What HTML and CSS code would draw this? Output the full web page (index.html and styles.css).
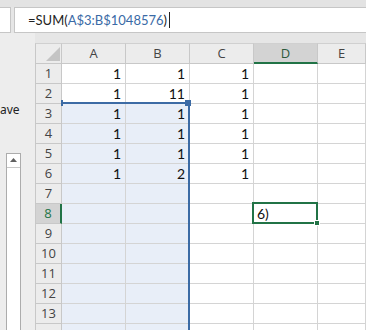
FILE: index.html
```html
<!DOCTYPE html>
<html lang="en">

<head>
  <meta charset="UTF-8" />
  <title>Book1 - Excel</title>
  <link rel="stylesheet" href="styles.css">
</head>

<body>

  <!-- Formula bar -->
  <div class="strip"></div>
  <div class="fbar">
    <div class="namebox"></div>
    <div class="formula">=SUM(<span class="ref">A$3:B$1048576</span>)<span class="caret"></span></div>
  </div>

  <div class="main">
    <!-- Dialog remains on the left -->
    <div class="pane">
      <span class="pane-label">ave</span>
      <div class="listbox">
        <div class="list-up">
          <svg width="7" height="4" viewBox="0 0 7 4"><polygon points="0,4 3.5,0 7,4" fill="#606060" /></svg>
        </div>
      </div>
    </div>

    <!-- Sheet -->
    <div class="sheet" id="sheet">
      <div class="corner">
        <svg width="14" height="14" viewBox="0 0 14 14"><polygon points="14,0 14,14 0,14" fill="#c4c4c4" /></svg>
      </div>
      <div class="colhead">A</div>
      <div class="colhead">B</div>
      <div class="colhead">C</div>
      <div class="colhead active">D</div>
      <div class="colhead">E</div>
    </div>
  </div>

  <script>
    const data = {
      1: ["1", "1", "1"],
      2: ["1", "11", "1"],
      3: ["1", "1", "1"],
      4: ["1", "1", "1"],
      5: ["1", "1", "1"],
      6: ["1", "2", "1"]
    };
    const sheet = document.getElementById("sheet");

    // row 14 only peeks in at the bottom, so it gets no label
    for (let r = 1; r <= 14; r++) {
      const head = document.createElement("div");
      head.className = "rowhead" + (r === 8 ? " active" : "");
      if (r < 14) head.innerText = r;
      sheet.appendChild(head);

      for (let c = 0; c < 5; c++) {
        const cell = document.createElement("div");
        cell.className = "cell";
        if (r >= 3 && c < 2) cell.classList.add("sel");
        const vals = data[r];
        if (vals && vals[c]) cell.innerText = vals[c];
        if (r === 8 && c === 3) {
          cell.innerText = "6)";
          cell.classList.add("text");
        }
        sheet.appendChild(cell);
      }
    }

    // overlays
    const selBox = document.createElement("div");
    selBox.className = "sel-box";
    selBox.innerHTML = '<span class="grip-left"></span><span class="grip-right"></span>';
    sheet.appendChild(selBox);

    const activeBox = document.createElement("div");
    activeBox.className = "active-box";
    activeBox.innerHTML = '<span class="fill-handle"></span>';
    sheet.appendChild(activeBox);
  </script>

</body>

</html>
```

FILE: styles.css
```css
* {
  margin: 0;
  padding: 0;
  box-sizing: border-box;
}

body {
  width: 366px;
  height: 330px;
  overflow: hidden;
  background: #e6e6e6;
  font-family: 'Open Sans', sans-serif;
}

.strip {
  height: 7px;
  background: #e3e3e3;
}

.fbar {
  height: 26px;
  display: flex;
  gap: 3px;
  background: #e6e6e6;
}

.namebox {
  width: 11px;
  background: #fff;
  border: 1px solid #c6c6c6;
  border-left: none;
}

.formula {
  flex: 1;
  background: #fff;
  border: 1px solid #c6c6c6;
  border-right: none;
  padding-left: 13px;
  font-family: 'Lato', sans-serif;
  font-size: 13px;
  line-height: 24px;
  color: #222;
  display: flex;
  align-items: center;
}

.ref {
  color: #3a6aa6;
}

.caret {
  width: 1px;
  height: 16px;
  background: #222;
  margin-left: 2px;
}

.main {
  display: flex;
  padding-top: 10px;
}

.pane {
  width: 35px;
  height: 300px;
  background: #ededed;
  margin-top: -10px;
  padding-top: 10px;
  position: relative;
}

.pane-label {
  display: block;
  margin-top: 60px;
  font-family: 'Noto Sans', sans-serif;
  font-size: 12px;
  color: #222;
  line-height: 14px;
}

.listbox {
  margin: 36px 0 0 6px;
  width: 15px;
  height: 200px;
  background: #fff;
  border: 1px solid #acacac;
}

.list-up {
  height: 14px;
  border-bottom: 1px solid #c8c8c8;
  display: flex;
  justify-content: center;
  align-items: center;
  padding-bottom: 2px;
}

.sheet {
  flex: 1;
  position: relative;
  display: grid;
  grid-template-columns: 27px 64px 64px 64px 64px 1fr;
  grid-template-rows: 21px;
  grid-auto-rows: 20px;
  background: #fff;
}

.corner {
  background: #ececec;
  border: 1px solid #c8c8c8;
  border-top: 1px solid #d0d0d0;
  display: flex;
  justify-content: flex-end;
  align-items: flex-end;
  padding: 0 1px 2px 0;
}

.colhead {
  background: #ececec;
  border-top: 1px solid #d0d0d0;
  border-right: 1px solid #c8c8c8;
  border-bottom: 1px solid #c8c8c8;
  text-align: center;
  font-size: 13px;
  line-height: 19px;
  color: #444;
}

.colhead.active {
  background: #d3d3d3;
  border-bottom: 2px solid #217346;
  color: #2d5a3b;
  line-height: 18px;
}

.rowhead {
  background: #ececec;
  border-left: 1px solid #c8c8c8;
  border-right: 1px solid #c8c8c8;
  border-bottom: 1px solid #c8c8c8;
  text-align: center;
  font-size: 13px;
  line-height: 19px;
  color: #444;
}

.rowhead.active {
  background: #d3d3d3;
  border-right: 2px solid #217346;
  color: #217346;
}

.cell {
  border-right: 1px solid #d4d4d4;
  border-bottom: 1px solid #d4d4d4;
  text-align: right;
  padding-right: 4px;
  font-family: 'Lato', sans-serif;
  font-size: 14px;
  line-height: 20px;
  color: #111;
}

.cell.sel {
  background: #e8eef8;
}

.cell.text {
  text-align: left;
  padding-left: 3px;
}

.sel-box {
  position: absolute;
  left: 26px;
  top: 59px;
  width: 129px;
  height: 260px;
  border-top: 2px solid #3c6ba5;
  border-right: 2px solid #3c6ba5;
}

.grip-left {
  position: absolute;
  left: 0;
  top: -4px;
  width: 2px;
  height: 6px;
  background: #3c6ba5;
}

.grip-right {
  position: absolute;
  right: -3px;
  top: -4px;
  width: 6px;
  height: 6px;
  background: #3c6ba5;
}

.active-box {
  position: absolute;
  left: 217px;
  top: 159px;
  width: 66px;
  height: 22px;
  border: 2px solid #217346;
}

.fill-handle {
  position: absolute;
  right: -4px;
  bottom: -4px;
  width: 6px;
  height: 6px;
  background: #217346;
  border: 1px solid #fff;
}
```
